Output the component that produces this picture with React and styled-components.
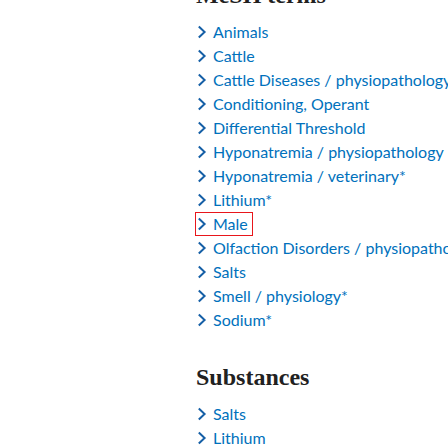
import React from 'react';
import styled, { createGlobalStyle } from 'styled-components';

const GlobalStyle = createGlobalStyle`
  html, body {
    margin: 0;
    padding: 0;
    background: #fff;
    overflow: hidden;
  }
  body {
    font-family: Lato, "Open Sans", sans-serif;
  }
`;

const Page = styled.div`
  display: grid;
  grid-template-columns: 196px 1fr;
  width: 448px;
  height: 448px;
  overflow: hidden;
`;

const Sidebar = styled.aside``;

const Main = styled.main`
  min-width: 0;
  margin-top: -19px;
`;

const Section = styled.section`
  & + & {
    margin-top: 32px;
  }
`;

const Heading = styled.h2`
  margin: 0 0 12px;
  font-family: "Liberation Serif", "DejaVu Serif", serif;
  font-weight: 700;
  font-size: 24px;
  line-height: 28px;
  color: #212121;
  white-space: nowrap;
`;

const List = styled.ul`
  list-style: none;
  margin: 0;
  padding: 0;
`;

const Item = styled.li`
  margin-bottom: 2px;
  white-space: nowrap;
`;

const Trigger = styled.button`
  display: inline-flex;
  align-items: center;
  gap: 6px;
  height: 22px;
  padding: 0 4px 0 1px;
  border: 0;
  background: none;
  font-family: Lato, "Open Sans", sans-serif;
  font-size: 16px;
  line-height: 22px;
  color: #0071bc;
  cursor: pointer;
  outline: ${(p) => (p.$active ? '1px solid #e8161b' : 'none')};
  outline-offset: 0;
`;

const Chevron = () => (
  <svg width="10" height="14" viewBox="0 0 10 14" fill="none">
    <path d="M1.8 1.5 L7.6 7 L1.8 12.5" stroke="#155fa6" strokeWidth="2" />
  </svg>
);

const meshTerms = [
  'Animals',
  'Cattle',
  'Cattle Diseases / physiopathology',
  'Conditioning, Operant',
  'Differential Threshold',
  'Hyponatremia / physiopathology',
  'Hyponatremia / veterinary*',
  'Lithium*',
  'Male',
  'Olfaction Disorders / physiopathology',
  'Salts',
  'Smell / physiology*',
  'Sodium*',
];

const substances = ['Salts', 'Lithium', 'Sodium'];

const TermList = ({ terms, active }) => (
  <List>
    {terms.map((term) => (
      <Item key={term}>
        <Trigger $active={term === active}>
          <Chevron />
          {term}
        </Trigger>
      </Item>
    ))}
  </List>
);

const App = () => (
  <>
    <GlobalStyle />
    <Page>
      <Sidebar />
      <Main>
        <Section>
          <Heading>MeSH terms</Heading>
          <TermList terms={meshTerms} active="Male" />
        </Section>
        <Section>
          <Heading>Substances</Heading>
          <TermList terms={substances} />
        </Section>
      </Main>
    </Page>
  </>
);

export default App;
